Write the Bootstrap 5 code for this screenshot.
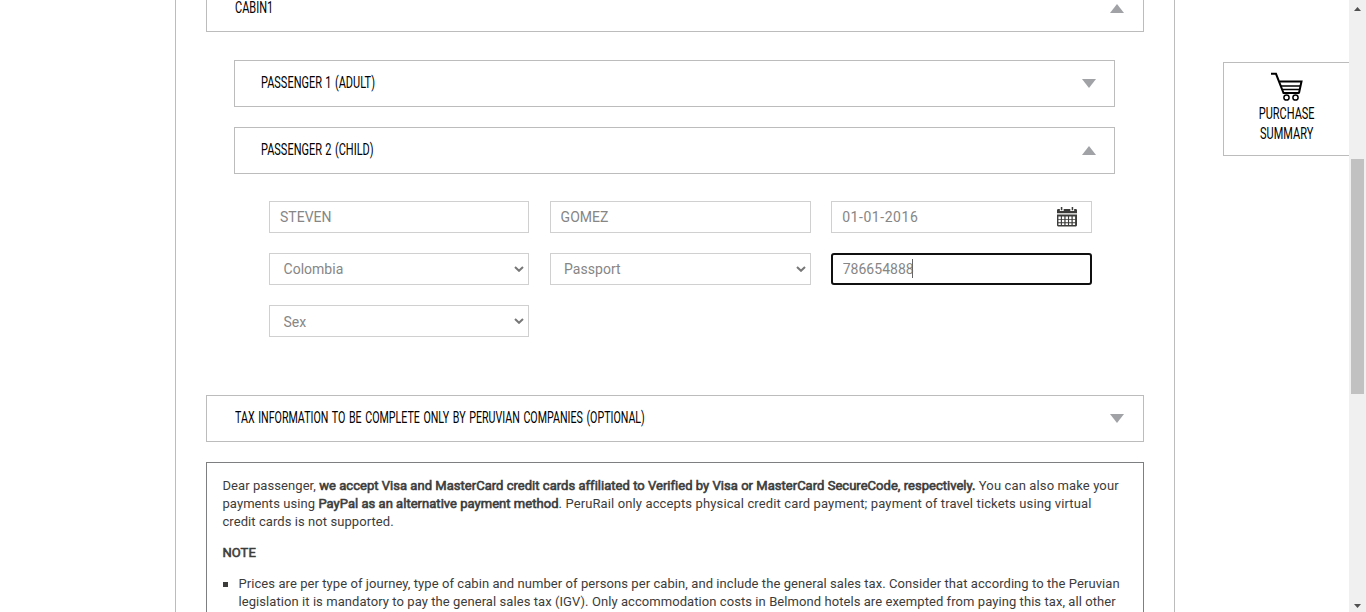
<!DOCTYPE html>
<html lang="en">
<head>
<meta charset="utf-8">
<meta name="viewport" content="width=device-width, initial-scale=1">
<title>Passenger details</title>
<link href="https://cdn.jsdelivr.net/npm/bootstrap@5.3.0/dist/css/bootstrap.min.css" rel="stylesheet">
<style>
html, body { height: 612px; overflow: hidden; }
body { font-family: Roboto, "Liberation Sans", sans-serif; color: #3c3c3b; background: #fff; }
.main-col { width: 1000px; margin-left: 175px; border: solid #bcbcbc; border-width: 0 1px; padding: 0 30px; height: 612px; overflow: hidden; }
.bar { height: 47px; border: 1px solid #bcbcbc; padding: 0 19px 0 28px; color: #000; }
.bar-cut { height: 32px; border-top: 0; }
.bar-sub { padding: 0 18px 0 26px; }
.bar .cond { margin-top: 12px; }
.bar .tri { margin-top: 18px; }
.bar-cut .cond { margin-top: 0; line-height: 15px; }
.bar-cut .tri { margin-top: 4px; }
.cond { display: inline-block; font-size: 16.4px; line-height: 20px; white-space: nowrap; word-spacing: 1px; transform-origin: 0 50%; transform: scaleX(.67); }
.cond-long { word-spacing: 1.5px; transform: scaleX(.65); }
.tri { display: block; width: 14px; height: 9px; fill: #a0a2a5; }
.fields { display: grid; grid-template-columns: 260px 261px 260.7px; column-gap: 20.6px; row-gap: 20px; margin: 27px 0 58px 35px; }
.fields .form-control, .fields .form-select { height: 32px; border: 1px solid #d0d0d0; border-radius: 0; font-size: 14px; line-height: 20px; color: #868686; letter-spacing: .02px; padding: 5px 10px; box-shadow: none; }
.fields .form-select { padding-left: 13.5px; background-image: url("data:image/svg+xml,%3Csvg xmlns='http://www.w3.org/2000/svg' viewBox='0 0 10 6'%3E%3Cpath d='M1 1l4 3.8L9 1' fill='none' stroke='%23777' stroke-width='2'/%3E%3C/svg%3E"); background-size: 10px 6px; background-position: right 4px center; }
.fields .date { letter-spacing: .55px; }
.fields .is-active { border: 2px solid #101010; border-radius: 3px; padding: 4px 9.5px; }
.caret { position: absolute; left: 81px; top: 6px; width: 1px; height: 19px; background: #666; }
.cal { position: absolute; right: 14.700px; top: 6px; width: 20px; height: 20px; }
.notice { border: 1px solid #7d7f80; padding: 14px 15.5px; height: 300px; font-size: 13px; line-height: 18px; letter-spacing: .07px; white-space: nowrap; }
.notice b { font-weight: 400; letter-spacing: .03px; -webkit-text-stroke: .6px #3c3c3b; }
.notice p { margin-bottom: 13px; }
.notice .loose { letter-spacing: .125px; }
.sq { flex: none; width: 5px; height: 5px; background: #3c3c3b; margin: 7px 10.500px 0 .5px; }
.summary { width: 126px; height: 94px; border: 1px solid #bcbcbc; border-right: 0; margin: 62px 0 0 48px; padding-top: 9px; color: #000; }
.summary .cond { transform-origin: 50% 50%; }
.sbar { width: 17px; height: 612px; background: #f0f0f0; margin-left: auto; padding: 7px 0 4px; }
.thumb { width: 13px; height: 235px; background: #c1c1c1; margin-top: 148px; }
</style>
</head>
<body>
<div class="d-flex">
  <main class="main-col flex-shrink-0">
    <div class="bar bar-cut d-flex justify-content-between align-items-start">
      <span class="cond">CABIN1</span>
      <svg class="tri" viewBox="0 0 14 9"><path d="M7 0l7 9H0z"/></svg>
    </div>
    <div style="padding:28px 29px 0 28px">
      <div class="bar bar-sub d-flex justify-content-between">
        <span class="cond">PASSENGER 1 (ADULT)</span>
        <svg class="tri" viewBox="0 0 14 9"><path d="M7 9l7-9H0z"/></svg>
      </div>
      <div class="bar bar-sub d-flex justify-content-between" style="margin-top:20px">
        <span class="cond">PASSENGER 2 (CHILD)</span>
        <svg class="tri" viewBox="0 0 14 9"><path d="M7 0l7 9H0z"/></svg>
      </div>
      <form class="fields">
        <input class="form-control" value="STEVEN" aria-label="First name">
        <input class="form-control" value="GOMEZ" aria-label="Last name">
        <div class="position-relative">
          <input class="form-control date" value="01-01-2016" aria-label="Date of birth">
          <svg class="cal" viewBox="0 0 21 21"><path fill="#3c3c3b" d="M1 2h2v2.200h4V2h7v2.200h4V2h2l1 1v3.500H0V3zM4 0h1.600v3.400H4zM15.400 0H17v3.400h-1.600zM0 8h21v11.500l-1 1H1l-1-1z"/><path fill="#fff" d="M1.500 10H4v2.500H1.500zM5.200 10h2.500v2.500H5.200zM9 10h2.500v2.500H9zM12.700 10h2.500v2.500h-2.500zM16.500 10H19v2.500h-2.500zM1.500 13.500H4V16H1.500zM5.200 13.500h2.500V16H5.200zM9 13.500h2.500V16H9zM12.700 13.500h2.500V16h-2.500zM16.500 13.500H19V16h-2.500zM1.500 17H4v2H1.500zM5.200 17h2.500v2H5.200zM9 17h2.500v2H9zM12.700 17h2.500v2h-2.500zM16.500 17H19v2h-2.500z"/></svg>
        </div>
        <select class="form-select" aria-label="Country"><option>Colombia</option></select>
        <select class="form-select" aria-label="Document"><option>Passport</option></select>
        <div class="position-relative">
          <input class="form-control is-active" value="786654888" aria-label="Document number"><span class="caret"></span>
        </div>
        <select class="form-select" style="padding-top:6px;padding-bottom:4px" aria-label="Sex"><option>Sex</option></select>
      </form>
    </div>
    <div class="bar d-flex justify-content-between">
      <span class="cond cond-long">TAX INFORMATION TO BE COMPLETE ONLY BY PERUVIAN COMPANIES (OPTIONAL)</span>
      <svg class="tri" viewBox="0 0 14 9"><path d="M7 9l7-9H0z"/></svg>
    </div>
    <div class="notice" style="margin-top:20px">
      <p>Dear passenger, <b>we accept Visa and MasterCard credit cards affiliated to Verified by Visa or MasterCard SecureCode, respectively.</b> <span class="loose">You can also make your</span><br>payments using <b>PayPal as an alternative payment method</b><span class="loose">. PeruRail only accepts physical credit card payment; payment of travel tickets using virtual</span><br>credit cards is not supported.</p>
      <p><b>NOTE</b></p>
      <div class="d-flex"><span class="sq"></span><div>Prices are per type of journey, type of cabin and number of persons per cabin, and include the general sales tax. Consider that according to the Peruvian<br>legislation it is mandatory to pay the general sales tax (IGV). Only accommodation costs in Belmond hotels are exempted from paying this tax, all other</div></div>
    </div>
  </main>
  <aside class="summary flex-shrink-0 d-flex flex-column align-items-center">
    <svg class="flex-shrink-0" style="margin-bottom:3px" width="32" height="29" viewBox="0 0 32 29" fill="none" stroke="#000"><path d="M0 1.800h5L12.500 21h16" stroke-width="2"/><path d="M8.500 9.500h22L28 21" stroke-width="2"/><path d="M10 14h19.500M11.500 17.500H29" stroke-width="1.600"/><circle cx="15.500" cy="25.500" r="2.600" stroke-width="1.500"/><circle cx="24.500" cy="25.500" r="2.600" stroke-width="1.500"/></svg>
    <span class="cond">PURCHASE</span>
    <span class="cond">SUMMARY</span>
  </aside>
  <div class="sbar d-flex flex-column align-items-center flex-shrink-0">
    <svg width="7" height="4" viewBox="0 0 7 4" fill="#505050"><path d="M3.500 0L7 4H0z"/></svg>
    <div class="thumb"></div>
    <svg class="mt-auto" width="7" height="4" viewBox="0 0 7 4" fill="#505050"><path d="M3.500 4L7 0H0z"/></svg>
  </div>
</div>
<script src="https://cdn.jsdelivr.net/npm/bootstrap@5.3.0/dist/js/bootstrap.bundle.min.js"></script>
</body>
</html>
